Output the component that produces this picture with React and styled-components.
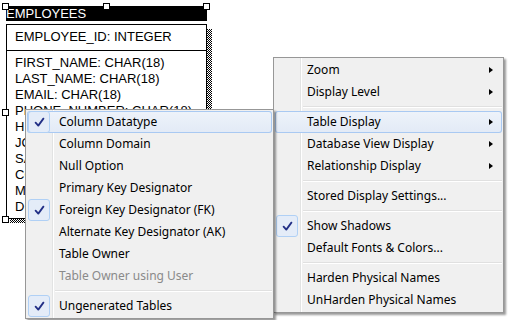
import React from "react";
import styled, { createGlobalStyle, css } from "styled-components";

const Global = createGlobalStyle`
  html, body { margin: 0; padding: 0; background: #fff; }
  * { box-sizing: border-box; }
`;

const Canvas = styled.div`
  position: relative;
  width: 516px;
  height: 320px;
  overflow: hidden;
  background: #fff;
`;

/* ---------- Diagram entity ---------- */
const EntityNode = styled.div`
  position: absolute;
  left: ${(p) => p.$x}px;
  top: ${(p) => p.$y}px;
  width: 201px;
  font-family: "Liberation Sans", Arial, sans-serif;
  font-size: 13px;
  color: #000;
  z-index: 1;
`;

const EntityTitle = styled.div`
  height: 15px;
  line-height: 15px;
  background: #000;
  color: #fff;
  white-space: nowrap;
  margin-bottom: 3px;
`;

const EntityBody = styled.div`
  position: relative;
  border: 1px solid #000;
  background: #fff;
  &::before {
    content: "";
    position: absolute;
    top: 4px;
    left: 3px;
    right: -6px;
    bottom: -5px;
    z-index: -1;
    background: repeating-conic-gradient(#000 0% 25%, #fff 0% 50%) 0 0 / 2px 2px;
  }
`;

const KeySection = styled.div`
  padding: 4px 8px 5px 8px;
  border-bottom: 1px solid #000;
`;

const NonKeySection = styled.div`
  padding: 4px 8px 3px 8px;
`;

const Attr = styled.div`
  line-height: 16px;
  height: 16px;
  white-space: nowrap;
`;

const Handle = styled.div`
  position: absolute;
  width: 7px;
  height: 7px;
  border: 1px solid #000;
  background: #fff;
  left: calc(${(p) => p.$x}% - 4px);
  top: calc(${(p) => p.$y}% - 3.5px);
`;

/* ---------- Popup menus ---------- */
const Menu = styled.div`
  position: absolute;
  left: ${(p) => p.$left}px;
  top: ${(p) => p.$top}px;
  width: ${(p) => p.$width}px;
  z-index: ${(p) => p.$z};
  border: 1px solid #979797;
  padding: 1px;
  font-family: "Noto Sans", "Segoe UI", sans-serif;
  font-size: 12px;
  color: #000;
  background:
    linear-gradient(
      to right,
      transparent 26px,
      #e2e3e3 26px,
      #e2e3e3 27px,
      #ffffff 27px,
      #ffffff 28px,
      transparent 28px
    ),
    #f0f0f0;
  box-shadow: 2px 2px 2px rgba(0, 0, 0, 0.4);
`;

const Item = styled.div`
  position: relative;
  display: flex;
  align-items: center;
  height: 22px;
  border-radius: 3px;
  white-space: nowrap;
  color: ${(p) => (p.$disabled ? "#8a8a8a" : "#000")};
  ${(p) =>
    p.$active &&
    css`
      background: linear-gradient(to bottom, #eef3fa, #e2eaf6);
      box-shadow: inset 0 0 0 1px #a9c9f2;
    `}
`;

const CheckSlot = styled.div`
  flex: none;
  width: 32px;
  height: 22px;
  display: flex;
  align-items: center;
`;

const CheckBox = styled.div`
  width: 22px;
  height: 22px;
  margin-left: 1px;
  border: 1px solid #b0d0f5;
  border-radius: 3px;
  background: #e4ecf8;
  display: flex;
  align-items: center;
  justify-content: center;
`;

const Label = styled.span`
  flex: 1;
  line-height: 22px;
`;

const Arrow = styled.span`
  flex: none;
  width: 0;
  height: 0;
  margin-right: 9px;
  border-left: 4px solid #000;
  border-top: 3.5px solid transparent;
  border-bottom: 3.5px solid transparent;
`;

const Separator = styled.div`
  height: 8px;
  padding: 3px 0 3px 28px;
  &::after {
    content: "";
    display: block;
    height: 1px;
    background: #e0e0e0;
    border-bottom: 1px solid #fff;
    box-sizing: content-box;
  }
`;

const Check = () => (
  <svg width="11" height="11" viewBox="0 0 11 11">
    <path
      d="M1.6 5.6 L4.3 8.6 L9.4 1.6"
      fill="none"
      stroke="#222f86"
      strokeWidth="1.8"
      strokeLinecap="round"
      strokeLinejoin="round"
    />
  </svg>
);

const MenuEntry = ({ label, checked, active, disabled, sub }) => (
  <Item $active={active} $disabled={disabled}>
    <CheckSlot>
      {checked && (
        <CheckBox>
          <Check />
        </CheckBox>
      )}
    </CheckSlot>
    <Label>{label}</Label>
    {sub && <Arrow />}
  </Item>
);

const attributes = [
  "FIRST_NAME: CHAR(18)",
  "LAST_NAME: CHAR(18)",
  "EMAIL: CHAR(18)",
  "PHONE_NUMBER: CHAR(18)",
  "HIRE_DATE: CHAR(18)",
  "JOB_ID: CHAR(18)",
  "SALARY: CHAR(18)",
  "COMMISSION_PCT: CHAR(18)",
  "MANAGER_ID: CHAR(18)",
  "DEPARTMENT_ID: CHAR(18)",
];

const handles = [
  [0, 0],
  [50, 0],
  [100, 0],
  [0, 50],
  [100, 50],
  [0, 100],
  [50, 100],
  [100, 100],
];

const mainMenu = [
  { label: "Zoom", sub: true },
  { label: "Display Level", sub: true },
  { sep: true },
  { label: "Table Display", sub: true, active: true },
  { label: "Database View Display", sub: true },
  { label: "Relationship Display", sub: true },
  { sep: true },
  { label: "Stored Display Settings..." },
  { sep: true },
  { label: "Show Shadows", checked: true },
  { label: "Default Fonts & Colors..." },
  { sep: true },
  { label: "Harden Physical Names" },
  { label: "UnHarden Physical Names" },
];

const subMenu = [
  { label: "Column Datatype", checked: true, active: true },
  { label: "Column Domain" },
  { label: "Null Option" },
  { label: "Primary Key Designator" },
  { label: "Foreign Key Designator (FK)", checked: true },
  { label: "Alternate Key Designator (AK)" },
  { label: "Table Owner" },
  { label: "Table Owner using User", disabled: true },
  { sep: true },
  { label: "Ungenerated Tables", checked: true },
];

const renderItems = (items) =>
  items.map((it, i) =>
    it.sep ? <Separator key={i} /> : <MenuEntry key={i} {...it} />
  );

export default function App() {
  return (
    <>
      <Global />
      <Canvas>
        <EntityNode $x={6} $y={6}>
          <EntityTitle>EMPLOYEES</EntityTitle>
          <EntityBody>
            <KeySection>
              <Attr>EMPLOYEE_ID: INTEGER</Attr>
            </KeySection>
            <NonKeySection>
              {attributes.map((a) => (
                <Attr key={a}>{a}</Attr>
              ))}
            </NonKeySection>
          </EntityBody>
          {handles.map(([x, y], i) => (
            <Handle key={i} $x={x} $y={y} />
          ))}
        </EntityNode>

        <Menu $left={273} $top={57} $width={231} $z={2}>
          {renderItems(mainMenu)}
        </Menu>

        <Menu $left={25} $top={109} $width={249} $z={3}>
          {renderItems(subMenu)}
        </Menu>
      </Canvas>
    </>
  );
}
